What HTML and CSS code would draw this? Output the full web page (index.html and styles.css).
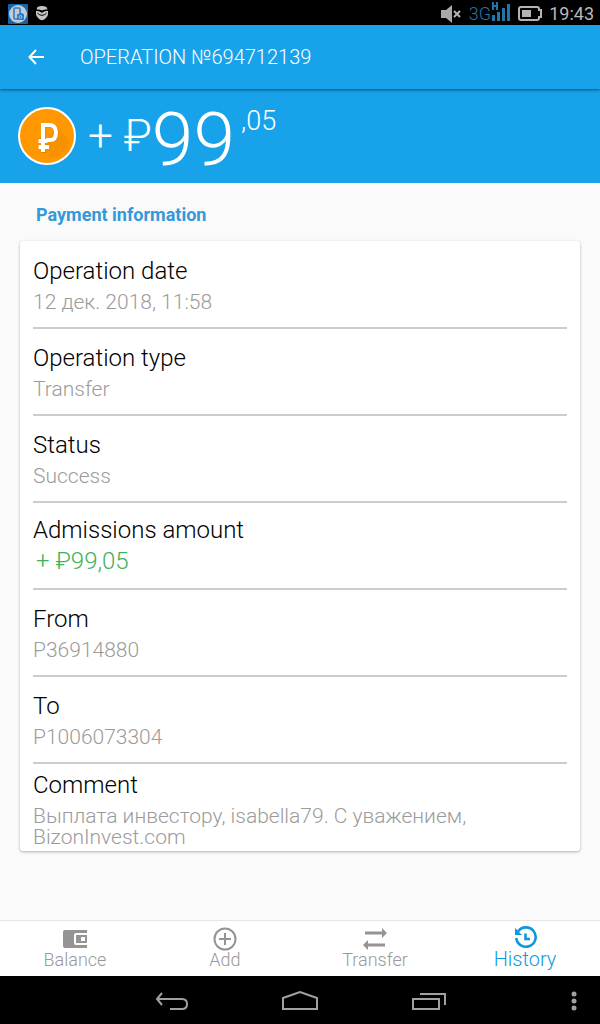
FILE: index.html
```html
<!DOCTYPE html>
<html lang="en">
  <head>
    <meta charset="UTF-8" />
    <meta name="viewport" content="width=device-width, initial-scale=1.0" />
    <title>Operation №694712139</title>
    <link rel="stylesheet" href="styles.css">
  </head>
  <body>
    <div class="status-bar">
      <div class="status-group">
        <svg width="20" height="20" viewBox="0 0 20 20">
          <rect width="20" height="20" rx="1" fill="#1565a8" />
          <circle cx="10" cy="10" r="9" fill="#c3cbd3" />
          <rect x="6" y="4" width="6" height="11" rx="1" fill="none" stroke="#2b7cd0" stroke-width="1.6" />
          <path d="M9 10h2l1-1h2l1 1h1v6H9z" fill="#2b7cd0" />
          <circle cx="12.5" cy="13" r="1.4" fill="none" stroke="#c3cbd3" stroke-width=".8" />
        </svg>
        <svg width="12" height="15" viewBox="0 0 12 15" fill="#c4c4c4">
          <path d="M1.500 1Q6-1 10.500 1L11.500 3.500Q8.500 3 6 4.500Q3.500 3 .5 3.500z" />
          <path d="M0 5Q3 4.500 4.500 6Q6 7.500 7.500 6Q9 4.500 12 5V8Q12 10.500 9.500 12.500Q6 16 2.500 12.500Q0 10.500 0 8z" />
          <path d="M1.500 7.200Q6 11.500 10.500 7.200" fill="none" stroke="#000" />
        </svg>
      </div>
      <div class="status-group status-right">
        <svg width="21" height="18" viewBox="0 0 21 18">
          <path d="M0 5h5l6-5v18l-6-5H0z" fill="#a9a9a9" />
          <path d="M13 6l6 6M19 6l-6 6" stroke="#b4b4b4" stroke-width="2" />
        </svg>
        <div class="network">
          <span>3G</span>
          <svg width="20" height="19" viewBox="0 0 20 19" fill="#1f78a8">
            <path d="M1 0h2v3h2V0h2v8H5V5H3v3H1z" />
            <path d="M1 13h3v6H1zM6 10h3v9H6zM11 6h3v13h-3zM16 2h3v17h-3z" />
          </svg>
        </div>
        <svg width="24" height="15" viewBox="0 0 24 15">
          <path d="M3 1h16q2 0 2 2v1h2v7h-2v1q0 2-2 2H3q-2 0-2-2V3q0-2 2-2z" fill="none" stroke="#b4b4b4" stroke-width="2" />
          <path d="M4 4h9v7H4z" fill="#b4b4b4" />
        </svg>
        <time>19:43</time>
      </div>
    </div>

    <header class="toolbar">
      <button class="back" type="button" aria-label="Back">
        <svg width="16" height="16" viewBox="0 0 16 16" fill="none" stroke="#fff" stroke-width="2">
          <path d="M8 1L1.500 8L8 15M1.500 8H16" />
        </svg>
      </button>
      <h1>OPERATION №694712139</h1>
    </header>

    <section class="total">
      <svg class="coin" width="58" height="58" viewBox="0 0 58 58">
        <circle cx="29" cy="29" r="28" fill="#ff9800" stroke="#fff" stroke-width="2" />
        <path d="M37 19L52 34Q47 47 34 51L23 43z" fill="#f28c00" opacity=".6" />
        <path d="M25.500 46V18.500H31.500Q38.500 18.500 38.500 25.500Q38.500 33 31.500 33H26M20.500 33h6M20.500 39.500H31" fill="none" stroke="#a85f00" stroke-width="4" opacity=".35" />
        <path d="M25 45V18H31Q38 18 38 25.500Q38 33 32 33H28M20.500 34h9M20.500 40H31" fill="none" stroke="#fff" stroke-width="4" />
      </svg>
      <p class="sum">
        <span class="sign">+ ₽</span><span class="whole">99</span><span class="cents">,05</span>
      </p>
    </section>

    <main>
      <h2>Payment information</h2>
      <dl class="card">
        <div class="row">
          <dt>Operation date</dt>
          <dd>12 дек. 2018, 11:58</dd>
        </div>
        <div class="row">
          <dt>Operation type</dt>
          <dd>Transfer</dd>
        </div>
        <div class="row">
          <dt>Status</dt>
          <dd>Success</dd>
        </div>
        <div class="row">
          <dt>Admissions amount</dt>
          <dd class="amount">+ ₽99,05</dd>
        </div>
        <div class="row">
          <dt>From</dt>
          <dd>P36914880</dd>
        </div>
        <div class="row">
          <dt>To</dt>
          <dd>P1006073304</dd>
        </div>
        <div class="row">
          <dt>Comment</dt>
          <dd>Выплата инвестору, isabella79. С уважением, BizonInvest.com</dd>
        </div>
      </dl>
    </main>

    <nav class="tabs">
      <a href="#balance">
        <svg width="24" height="24" viewBox="0 0 24 24" fill="#949494">
          <path d="M2 3h22v3H13q-2 0-2 2v8q0 2 2 2h11v3H2q-2 0-2-2V5q0-2 2-2z" />
          <path d="M13 8h11v8H13zM18 10v4h4v-4z" fill-rule="evenodd" />
        </svg>
        Balance
      </a>
      <a href="#add">
        <svg width="24" height="24" viewBox="0 0 24 24" fill="none" stroke="#949494" stroke-width="2">
          <circle cx="12" cy="12" r="10.500" />
          <path d="M12 6v12M6 12h12" />
        </svg>
        Add
      </a>
      <a href="#transfer">
        <svg width="24" height="24" viewBox="0 0 24 24" fill="#949494">
          <path d="M2 4.500h17V1l5 5-5 5V7.500H2zM22 16.500H5V13l-5 5 5 5v-3.500h17z" />
        </svg>
        Transfer
      </a>
      <a class="active" href="#history">
        <svg width="24" height="24" viewBox="0 0 24 24" fill="none" stroke="#0d98dc" stroke-width="2.600">
          <path d="M5 5.500A9.700 9.700 0 1 1 3.300 12" />
          <path d="M2 2V9h7z" fill="#0d98dc" stroke="none" />
          <path d="M12.500 7.500v5.500H17" />
        </svg>
        History
      </a>
    </nav>

    <div class="system-nav">
      <button type="button" aria-label="System back">
        <svg width="34" height="20" viewBox="0 0 34 20" fill="none" stroke="#a0a0a0" stroke-width="2">
          <path d="M8 2L3 8l5 6M3 8h25q5 0 5 5t-5 5H16" />
        </svg>
      </button>
      <button type="button" aria-label="Home">
        <svg width="36" height="20" viewBox="0 0 36 20" fill="none" stroke="#a0a0a0" stroke-width="2">
          <path d="M1 7L18 1l17 6v11H1z" />
        </svg>
      </button>
      <button type="button" aria-label="Recent apps">
        <svg width="34" height="20" viewBox="0 0 34 20" fill="none" stroke="#a0a0a0" stroke-width="2">
          <path d="M1 8h26v10H1zM8 3h25v11" />
        </svg>
      </button>
      <button class="more" type="button" aria-label="More options">
        <svg width="6" height="20" viewBox="0 0 6 20" fill="#a0a0a0">
          <circle cx="3" cy="3" r="2.500" />
          <circle cx="3" cy="10" r="2.500" />
          <circle cx="3" cy="17" r="2.500" />
        </svg>
      </button>
    </div>
  </body>
</html>
```
FILE: styles.css
```css
* {
  box-sizing: border-box;
}

body {
  margin: 0;
  min-height: 100vh;
  display: flex;
  flex-direction: column;
  background: #fafafa;
  font-family: Roboto, "Noto Sans", sans-serif;
  font-weight: 300;
}

h1,
h2,
p,
dl,
dd {
  margin: 0;
}

svg {
  display: block;
  flex: none;
}

button {
  padding: 0;
  border: 0;
  background: none;
  cursor: pointer;
}

.status-bar {
  display: flex;
  align-items: center;
  justify-content: space-between;
  height: 25px;
  padding: 2px 6px 0 8px;
  background: #000;
  color: #b8b8b8;
  font-size: 18px;
  font-weight: 400;
}

.status-group {
  display: flex;
  align-items: center;
  gap: 8px;
}

.status-right {
  gap: 7px;
}

.network {
  display: flex;
  align-items: center;
  color: #1f78a8;
}

.network svg {
  margin-bottom: 4px;
}

.network span {
  font-weight: 300;
}

.toolbar {
  position: relative;
  display: flex;
  align-items: center;
  gap: 36px;
  height: 64px;
  padding: 0 28px;
  background: #18a2ea;
  box-shadow: 0 1px 3px rgba(0, 0, 0, 0.5);
  color: #fff;
}

.toolbar h1 {
  font-size: 20px;
  font-weight: 300;
}

.total {
  display: flex;
  align-items: center;
  gap: 12px;
  height: 94px;
  padding: 0 18px;
  background: #18a2ea;
  color: #fff;
}

.sum {
  display: flex;
  align-items: center;
  line-height: 72px;
}

.sign {
  font-size: 44px;
}

.whole {
  padding-top: 6px;
  font-size: 75px;
}

.cents {
  align-self: flex-start;
  margin-left: 6px;
  font-size: 27px;
  line-height: 48px;
}

main {
  flex: 1;
  padding: 20px 20px 40px;
}

h2 {
  padding: 0 16px;
  margin-bottom: 14px;
  color: #3498db;
  font-size: 18px;
  font-weight: 700;
  line-height: 24px;
}

.card {
  padding: 1px 13px 0;
  background: #fff;
  border-radius: 3px;
  box-shadow: 0 1px 3px rgba(0, 0, 0, 0.3);
}

.row {
  display: flex;
  flex-direction: column;
  justify-content: center;
  gap: 5px;
  min-height: 87px;
  padding-bottom: 2px;
  border-bottom: 2px solid #ccc;
}

.row:last-child {
  padding: 2px 0 0;
  border-bottom: 0;
}

dt {
  color: #000;
  font-size: 24px;
  line-height: 32px;
}

dd {
  color: #9b9b9b;
  font-size: 21px;
  line-height: 21px;
}

.amount {
  padding: 0 0 4px 3px;
  color: #3fb05c;
  font-size: 24px;
}

.tabs {
  display: flex;
  height: 56px;
  background: #fff;
  border-top: 1px solid #e6e6e6;
}

.tabs a {
  flex: 1;
  display: flex;
  flex-direction: column;
  align-items: center;
  padding-top: 6px;
  color: #999;
  font-size: 18px;
  line-height: 18px;
  text-decoration: none;
}

.tabs .active {
  padding-top: 5px;
  color: #0d98dc;
  font-size: 20px;
}

.system-nav {
  position: relative;
  display: flex;
  align-items: center;
  justify-content: center;
  gap: 94px;
  height: 48px;
  padding-top: 2px;
  background: #000;
}

.more {
  position: absolute;
  right: 23px;
}
```
